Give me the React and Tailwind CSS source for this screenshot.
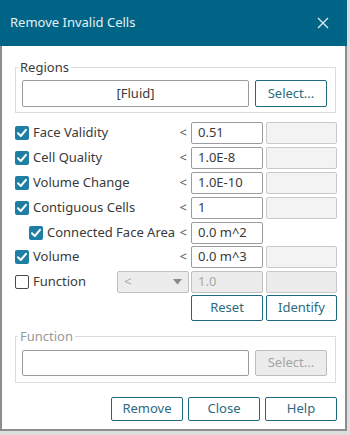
import React from "react";

function Check({ checked }) {
  if (checked) {
    return (
      <div className="w-[14px] h-[14px] rounded-[2px] bg-[#1f7ea4] flex items-center justify-center shrink-0">
        <svg width="12" height="12" viewBox="0 0 12 12">
          <polyline points="2,6.2 4.8,9 10,2.8" fill="none" stroke="#ffffff" strokeWidth="2" strokeLinecap="round" strokeLinejoin="round" />
        </svg>
      </div>
    );
  }
  return <div className="w-[14px] h-[14px] rounded-[2px] border border-[#4a4a4a] bg-white shrink-0" />;
}

function Row({ checked = true, label, value, indent = false, second = true, className = "" }) {
  return (
    <div className={"flex items-center h-[22px] " + className}>
      <div className={indent ? "flex items-center flex-1 pl-[14px]" : "flex items-center flex-1"}>
        <Check checked={checked} />
        <span className="ml-[4px] text-[13px] text-[#3a3a3a]">{label}</span>
      </div>
      <span className="mr-[4px] text-[13px] text-[#555]">&lt;</span>
      <div className="w-[72px] h-[22px] border border-[#9c9c9c] rounded-[2px] bg-white flex items-center pl-[6px] text-[13px] text-[#3a3a3a]">
        {value}
      </div>
      {second ? (
        <div className="ml-[3px] w-[71px] h-[22px] border border-[#c9c9c9] rounded-[2px] bg-[#f3f3f3]" />
      ) : (
        <div className="ml-[3px] w-[71px] h-[22px]" />
      )}
    </div>
  );
}

function Btn({ children, className = "" }) {
  return (
    <div
      className={
        "flex items-center justify-center border border-[#1e6a80] rounded-[2px] bg-white text-[13px] text-[#2b6b80] " +
        className
      }
    >
      {children}
    </div>
  );
}

export default function App() {
  return (
    <div className="w-[350px] h-[435px] bg-[#dedede] font-['Noto_Sans',sans-serif]">
      <div className="w-[347px] h-[431px] flex flex-col">
        <div className="h-[46px] bg-[#006487] flex items-center justify-between pl-[10px] pr-[18px]">
          <span className="text-[13px] text-[#e4f0f4]">Remove Invalid Cells</span>
          <svg width="12" height="12" viewBox="0 0 12 12">
            <path d="M1 1 L11 11 M11 1 L1 11" stroke="#dbe9ee" strokeWidth="1.4" />
          </svg>
        </div>
        <div className="flex-1 bg-white border-l-2 border-r-2 border-b-2 border-[#8d8d8d] pl-[13px] pr-[8px] flex flex-col">
          <fieldset className="mt-[12px] mr-[1px] border border-[#dcdcdc] pl-[6px] pr-[8px] pt-[4px] pb-[5px]">
            <legend className="ml-[-4px] px-[2px] text-[13px] leading-[18px] text-[#3a3a3a]">Regions</legend>
            <div className="flex items-center">
              <div className="w-[227px] h-[27px] border border-[#9c9c9c] rounded-[2px] flex items-center justify-center text-[13px] text-[#3a3a3a]">
                [Fluid]
              </div>
              <Btn className="ml-[6px] w-[72px] h-[27px]">Select...</Btn>
            </div>
          </fieldset>

          <div className="mt-[9px] flex flex-col">
            <Row label="Face Validity" value="0.51" />
            <Row label="Cell Quality" value="1.0E-8" className="mt-[3px]" />
            <Row label="Volume Change" value="1.0E-10" className="mt-[3px]" />
            <Row label="Contiguous Cells" value="1" className="mt-[3px]" />
            <Row label="Connected Face Area" value="0.0 m^2" indent second={false} className="mt-[3px]" />
            <Row label="Volume" value="0.0 m^3" className="mt-[2px]" />
            <div className="mt-[3px] flex items-center h-[22px]">
              <div className="flex items-center flex-1">
                <Check checked={false} />
                <span className="ml-[4px] text-[13px] text-[#3a3a3a]">Function</span>
              </div>
              <div className="w-[72px] h-[22px] mr-[2px] border border-[#c0c0c0] rounded-[2px] bg-[#ececec] flex items-center justify-between pl-[6px] pr-[6px] text-[13px] text-[#a8a8a8]">
                <span>&lt;</span>
                <svg width="9" height="6" viewBox="0 0 9 6">
                  <path d="M0 0 L9 0 L4.5 5.5 Z" fill="#8a8a8a" />
                </svg>
              </div>
              <div className="w-[72px] h-[22px] border border-[#c0c0c0] rounded-[2px] bg-[#ececec] flex items-center pl-[6px] text-[13px] text-[#a8a8a8]">
                1.0
              </div>
              <div className="ml-[3px] w-[71px] h-[22px] border border-[#c9c9c9] rounded-[2px] bg-[#ececec]" />
            </div>
            <div className="mt-[2px] flex justify-end h-[26px]">
              <Btn className="w-[72px] h-[26px] border-[1.5px]">Reset</Btn>
              <Btn className="ml-[3px] w-[71px] h-[26px] border-[1.5px]">Identify</Btn>
            </div>
          </div>

          <fieldset className="mt-[6px] mr-[1px] border border-[#dcdcdc] pl-[6px] pr-[8px] pt-[5px] pb-[6px]">
            <legend className="ml-[-4px] px-[2px] text-[13px] leading-[18px] text-[#9a9a9a]">Function</legend>
            <div className="flex items-center">
              <div className="w-[227px] h-[26px] border border-[#9c9c9c] rounded-[2px] bg-white" />
              <div className="ml-[6px] w-[72px] h-[26px] border border-[#bdbdbd] rounded-[2px] bg-[#ececec] flex items-center justify-center text-[13px] text-[#a5a5a5]">
                Select...
              </div>
            </div>
          </fieldset>

          <div className="mt-[14px] flex justify-end gap-[5px]">
            <Btn className="w-[72px] h-[24px]">Remove</Btn>
            <Btn className="w-[72px] h-[24px]">Close</Btn>
            <Btn className="w-[72px] h-[24px]">Help</Btn>
          </div>
        </div>
      </div>
    </div>
  );
}
